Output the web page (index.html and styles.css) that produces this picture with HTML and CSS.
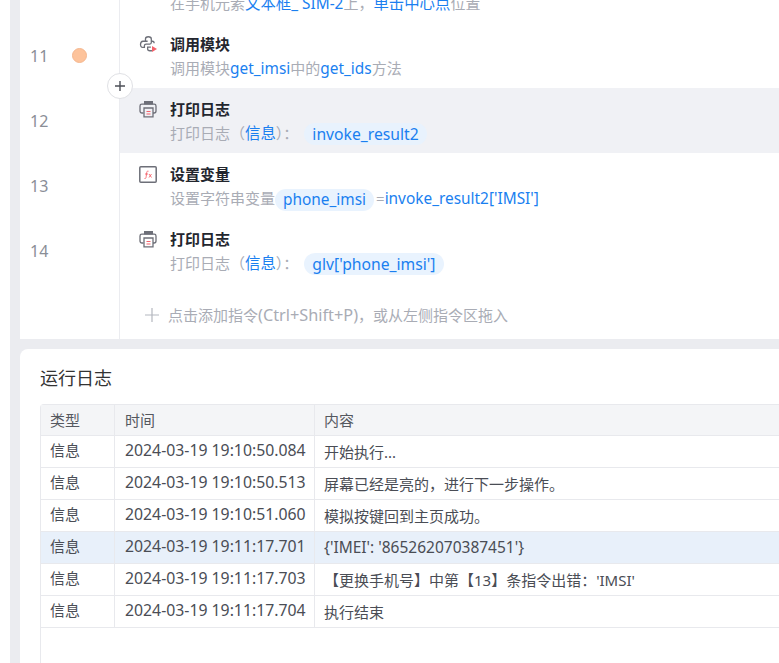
FILE: index.html
```html
<!DOCTYPE html>
<html lang="zh-CN">
<head>
<meta charset="utf-8">
<title>运行日志</title>
<link rel="stylesheet" href="styles.css">
</head>
<body>
<div class="main">
  <section class="flow">
    <div class="steps">
      <div class="row row-cut">
        <div class="gutter"></div>
        <div class="step">
          <div class="title"></div>
          <div class="desc">在手机元素<span class="lk">文本框_ SIM-2</span>上，<span class="lk">单击中心点</span>位置</div>
        </div>
      </div>
      <div class="row">
        <div class="gutter"><span class="num">11</span><span class="dot"></span></div>
        <div class="step">
          <div class="title">
            <svg class="icon" viewBox="0 0 18 20" fill="none"><g transform="translate(0 2) scale(1.08)" stroke="#6d6f78" stroke-width="1.200"><path d="M6 5V3.600C6 2.400 7 1.600 8.600 1.600s2.800.8 2.800 2V7c0 .8-.6 1.400-1.400 1.400H6.600C5.600 8.400 5 9 5 10v1.400H3.400C2.200 11.400 1.400 10.400 1.400 8.800S2.200 5.800 3.600 5.800h4.400"/><path d="M11.400 5.800h1c1 0 1.600.8 1.600 1.800M11 11.200H8V13c0 1 .8 1.600 2 1.600h2"/></g><path d="M13 13l5 3-5 3z" fill="#f4626b"/></svg>
            <span>调用模块</span>
          </div>
          <div class="desc">调用模块<span class="lk">get_imsi</span>中的<span class="lk">get_ids</span>方法</div>
        </div>
      </div>
      <div class="row">
        <div class="gutter"><span class="num">12</span></div>
        <div class="step active">
          <div class="title">
            <svg class="icon" viewBox="0 0 18 20" fill="none"><path d="M5 6.500V3h9v3.500z" fill="#6d6f78"/><path d="M4.500 15H3C1.800 15 1 14.200 1 13V8c0-1 .8-1.800 1.800-1.800h12.400c1 0 1.800.8 1.800 1.800v5c0 1.200-.8 2-2 2h-1.500" stroke="#6d6f78" stroke-width="1.300"/><path d="M5 10h9v8.800H5z" fill="#f0f1f5" stroke="#6d6f78" stroke-width="1.300"/><path d="M7.500 13.500h4M7.500 16h4" stroke="#f4626b" stroke-width="1.100"/></svg>
            <span>打印日志</span>
          </div>
          <div class="desc">打印日志（<span class="lk">信息</span>）：<span class="pill pill-gap">invoke_result2</span></div>
        </div>
      </div>
      <div class="row">
        <div class="gutter"><span class="num">13</span></div>
        <div class="step">
          <div class="title">
            <svg class="icon" viewBox="0 0 18 20" fill="none"><rect x=".8" y="3.800" width="16.400" height="15.400" rx="1" stroke="#6d6f78" stroke-width="1.500"/><path d="M5.500 15.500c1.300.3 1.500-.5 1.700-2l.5-4c.2-1.200.8-1.600 1.800-1.300M6 11h3M10 11l2.500 3.500M12.500 11L10 14.500" stroke="#f4626b" stroke-width=".9"/></svg>
            <span>设置变量</span>
          </div>
          <div class="desc">设置字符串变量<span class="pill">phone_imsi</span><span class="eq">=</span><span class="lk">invoke_result2['IMSI']</span></div>
        </div>
      </div>
      <div class="row">
        <div class="gutter"><span class="num">14</span></div>
        <div class="step">
          <div class="title">
            <svg class="icon" viewBox="0 0 18 20" fill="none"><path d="M5 6.500V3h9v3.500z" fill="#6d6f78"/><path d="M4.500 15H3C1.800 15 1 14.200 1 13V8c0-1 .8-1.800 1.800-1.800h12.400c1 0 1.800.8 1.800 1.800v5c0 1.200-.8 2-2 2h-1.500" stroke="#6d6f78" stroke-width="1.300"/><path d="M5 10h9v8.800H5z" fill="#fff" stroke="#6d6f78" stroke-width="1.300"/><path d="M7.500 13.500h4M7.500 16h4" stroke="#f4626b" stroke-width="1.100"/></svg>
            <span>打印日志</span>
          </div>
          <div class="desc">打印日志（<span class="lk">信息</span>）：<span class="pill pill-gap">glv['phone_imsi']</span></div>
        </div>
      </div>
      <div class="row row-add">
        <div class="gutter"></div>
        <div class="add">
          <svg class="add-icon" viewBox="0 0 14 14" fill="none"><path d="M7 0v14M0 7h14" stroke="#b4b7bf" stroke-width="1.200"/></svg>
          <span>点击添加指令<span class="lat-wide">(Ctrl+Shift+P)</span>，或从左侧指令区拖入</span>
        </div>
      </div>
    </div>
    <button class="insert" type="button" aria-label="插入">
      <svg viewBox="0 0 12 12" fill="none"><path d="M6 1v10M1 6h10" stroke="#4c4f57" stroke-width="1.400"/></svg>
    </button>
  </section>
  <section class="log">
    <h2 class="log-title">运行日志</h2>
    <div class="table-wrap">
      <table class="table">
        <colgroup><col class="c1"><col class="c2"><col class="c3"></colgroup>
        <thead><tr><th>类型</th><th>时间</th><th>内容</th></tr></thead>
        <tbody>
          <tr><td>信息</td><td>2024-03-19 19:10:50.084</td><td>开始执行...</td></tr>
          <tr><td>信息</td><td>2024-03-19 19:10:50.513</td><td>屏幕已经是亮的，进行下一步操作。</td></tr>
          <tr><td>信息</td><td>2024-03-19 19:10:51.060</td><td>模拟按键回到主页成功。</td></tr>
          <tr class="sel"><td>信息</td><td>2024-03-19 19:11:17.701</td><td class="lat">{'IMEI': '865262070387451'}</td></tr>
          <tr><td>信息</td><td>2024-03-19 19:11:17.703</td><td>【更换手机号】中第【13】条指令出错：'IMSI'</td></tr>
          <tr><td>信息</td><td>2024-03-19 19:11:17.704</td><td>执行结束</td></tr>
        </tbody>
      </table>
    </div>
  </section>
</div>
</body>
</html>
```

FILE: styles.css
```css
* { box-sizing: border-box; }
html, body { margin: 0; height: 663px; overflow: hidden; background: #fff; }
body { font-family: "Noto Sans", "Noto Sans CJK SC", sans-serif; font-size: 15px; color: #333; }
.main { margin-left: 10px; padding-left: 10px; height: 663px; width: 769px; background: #ebecf0; overflow: hidden; display: flex; flex-direction: column; gap: 10px; }
.flow { position: relative; background: #fff; height: 339px; flex: none; overflow: hidden; }
.steps { margin-top: -42px; display: flex; flex-direction: column; }
.row { display: flex; height: 65px; flex: none; }
.gutter { width: 100px; flex: none; border-right: 1px solid #ebecf0; display: flex; align-items: center; padding-left: 10px; position: relative; }
.num { font-size: 16px; color: #8a8e97; line-height: 1; }
.dot { width: 15px; height: 15px; border-radius: 50%; background: #fdc39b; border: 1px solid #f5b78f; margin-left: 24px; margin-top: -1px; }
.step { flex: 1; padding: 8px 0 0 19px; min-width: 0; white-space: nowrap; }
.step.active { background: #f0f1f5; }
.title { display: flex; align-items: center; height: 24px; font-size: 15px; font-weight: 700; color: #23262e; gap: 13px; }
.icon { width: 18px; height: 20px; flex: none; overflow: visible; }
.desc { height: 24px; line-height: 24px; margin-left: 31px; margin-top: 1px; color: #a9acb5; font-size: 15px; }
.lk { color: #1a7ff0; font-size: 15.4px; }
.pill { display: inline-block; vertical-align: -1px; color: #1a7ff0; font-size: 15.4px; background: #e9f3fe; border-radius: 11px; padding: 0 8px; height: 22px; line-height: 22px; }
.step.active .pill { background: #e8f2fd; }
.pill-gap { margin-left: 6px; font-size: 15.7px; }
.eq { color: #a9acb5; font-size: 15px; margin-left: 2px; }
.row-add { height: 56px; }
.add { flex: 1; display: flex; align-items: center; gap: 9px; padding: 7px 0 0 25px; color: #a9acb5; font-size: 15px; white-space: nowrap; }
.lat-wide { font-size: 16.300px; }
.add-icon { width: 14px; height: 14px; flex: none; }
.insert { position: absolute; left: 87px; top: 73px; width: 26px; height: 26px; padding: 0; border-radius: 50%; background: #fff; border: 1px solid #e0e1e5; display: flex; align-items: center; justify-content: center; }
.insert svg { width: 12px; height: 12px; }
.log { flex: 1; background: #fff; border-radius: 8px 0 0 0; padding: 16px 0 0 20px; overflow: hidden; }
.log-title { margin: 0; font-size: 18px; font-weight: 400; color: #333; line-height: 27px; }
.table-wrap { margin-top: 12px; width: 780px; height: 400px; border-left: 1px solid #e8e9ed; border-top: 1px solid #e8e9ed; border-radius: 4px 0 0 0; }
.table { border-collapse: separate; border-spacing: 0; table-layout: fixed; width: 100%; }
.c1 { width: 74px; }
.c2 { width: 200px; }
th, td { height: 32px; padding: 0 9px; text-align: left; font-size: 15px; font-weight: 400; border-right: 1px solid #e8e9ed; border-bottom: 1px solid #e8e9ed; color: #4a4d55; white-space: nowrap; }
th { height: 31px; padding-bottom: 2px; background: #f4f5f7; color: #55585f; }
td { padding-bottom: 1px; }
td:nth-child(-n+2) { padding-bottom: 4px; }
td:nth-child(2), th:nth-child(2) { padding-left: 10px; }
td:nth-child(2) { font-size: 15.8px; }
td.lat { font-size: 15.5px; }
tr.sel td { background: #e8f0fa; }
```
